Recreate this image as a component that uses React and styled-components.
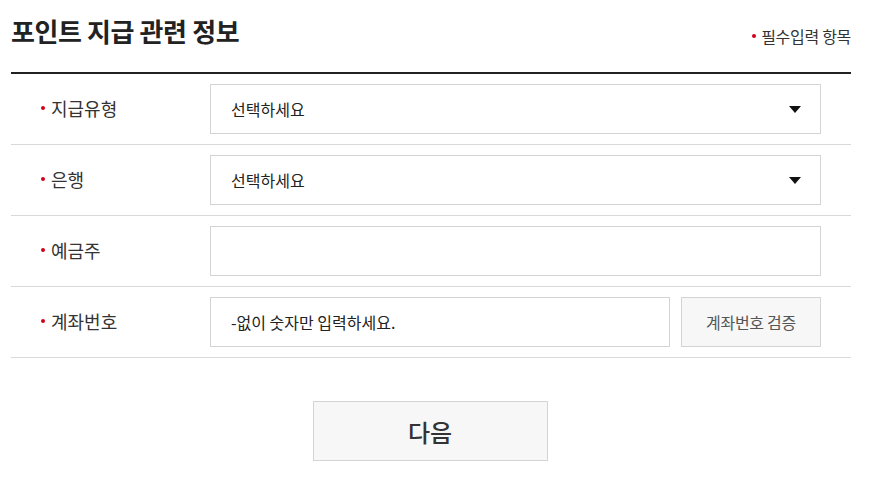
import React from "react";
import styled, { createGlobalStyle } from "styled-components";

const Global = createGlobalStyle`
  html, body { margin: 0; padding: 0; background: #fff; }
  body { font-family: "Noto Sans CJK KR", "Noto Sans", sans-serif; color: #333; }
  * { box-sizing: border-box; }
`;

const Wrap = styled.div`
  width: 840px;
  margin-left: 11px;
`;

const Header = styled.div`
  height: 74px;
  border-bottom: 2px solid #222;
  display: flex;
  justify-content: space-between;
  align-items: flex-start;
`;

const Title = styled.h2`
  margin: 12px 0 0 0;
  font-size: 26px;
  font-weight: 700;
  color: #222;
  line-height: 38px;
  letter-spacing: -0.4px;
`;

const Req = styled.span`
  margin-top: 24px;
  font-size: 16px;
  line-height: 24px;
  color: #333;
  display: flex;
  align-items: center;
  gap: 5px;
  letter-spacing: -0.3px;
`;

const Dot = styled.i`
  display: inline-block;
  width: 4px;
  height: 4px;
  border-radius: 50%;
  background: #d0021b;
`;

const Row = styled.div`
  display: grid;
  grid-template-columns: 199px 611px;
  align-items: center;
  padding: 10px 0;
  border-bottom: 1px solid #d9d9d9;
`;

const Label = styled.div`
  padding-left: 30px;
  display: flex;
  align-items: center;
  gap: 6px;
  font-size: 18px;
  line-height: 24px;
  color: #333;
  margin-top: -3px;
`;

const Field = styled.div`
  display: flex;
  gap: 11px;
`;

const Box = styled.div`
  flex: 1;
  height: 50px;
  border: 1px solid #d4d4d4;
  display: flex;
  align-items: center;
  justify-content: space-between;
  padding: 0 19px 0 20px;
  font-size: 16px;
  color: #222;
  background: #fff;
`;

const Arrow = styled.span`
  width: 0;
  height: 0;
  border-left: 6px solid transparent;
  border-right: 6px solid transparent;
  border-top: 7px solid #111;
`;

const GrayBtn = styled.button`
  width: 140px;
  height: 50px;
  border: 1px solid #d4d4d4;
  background: #f7f7f7;
  font-family: inherit;
  font-size: 16px;
  color: #555;
  padding: 0;
  letter-spacing: -0.3px;
`;

const Foot = styled.div`
  display: flex;
  justify-content: center;
  padding-top: 43px;
`;

const NextBtn = styled.button`
  width: 235px;
  height: 60px;
  border: 1px solid #d4d4d4;
  background: #f7f7f7;
  font-family: inherit;
  font-size: 24px;
  font-weight: 500;
  color: #333;
  padding: 0;
  margin-left: -2px;
`;

const rows = [
  { label: "지급유형", select: "선택하세요" },
  { label: "은행", select: "선택하세요" },
  { label: "예금주", text: "" },
];

export default function App() {
  return (
    <>
      <Global />
      <Wrap>
        <Header>
          <Title>포인트 지급 관련 정보</Title>
          <Req>
            <Dot />
            필수입력 항목
          </Req>
        </Header>
        {rows.map((r) => (
          <Row key={r.label}>
            <Label>
              <Dot />
              {r.label}
            </Label>
            <Field>
              <Box>
                {r.select ?? r.text}
                {r.select && <Arrow />}
              </Box>
            </Field>
          </Row>
        ))}
        <Row>
          <Label>
            <Dot />
            계좌번호
          </Label>
          <Field>
            <Box>-없이 숫자만 입력하세요.</Box>
            <GrayBtn>계좌번호 검증</GrayBtn>
          </Field>
        </Row>
        <Foot>
          <NextBtn>다음</NextBtn>
        </Foot>
      </Wrap>
    </>
  );
}
